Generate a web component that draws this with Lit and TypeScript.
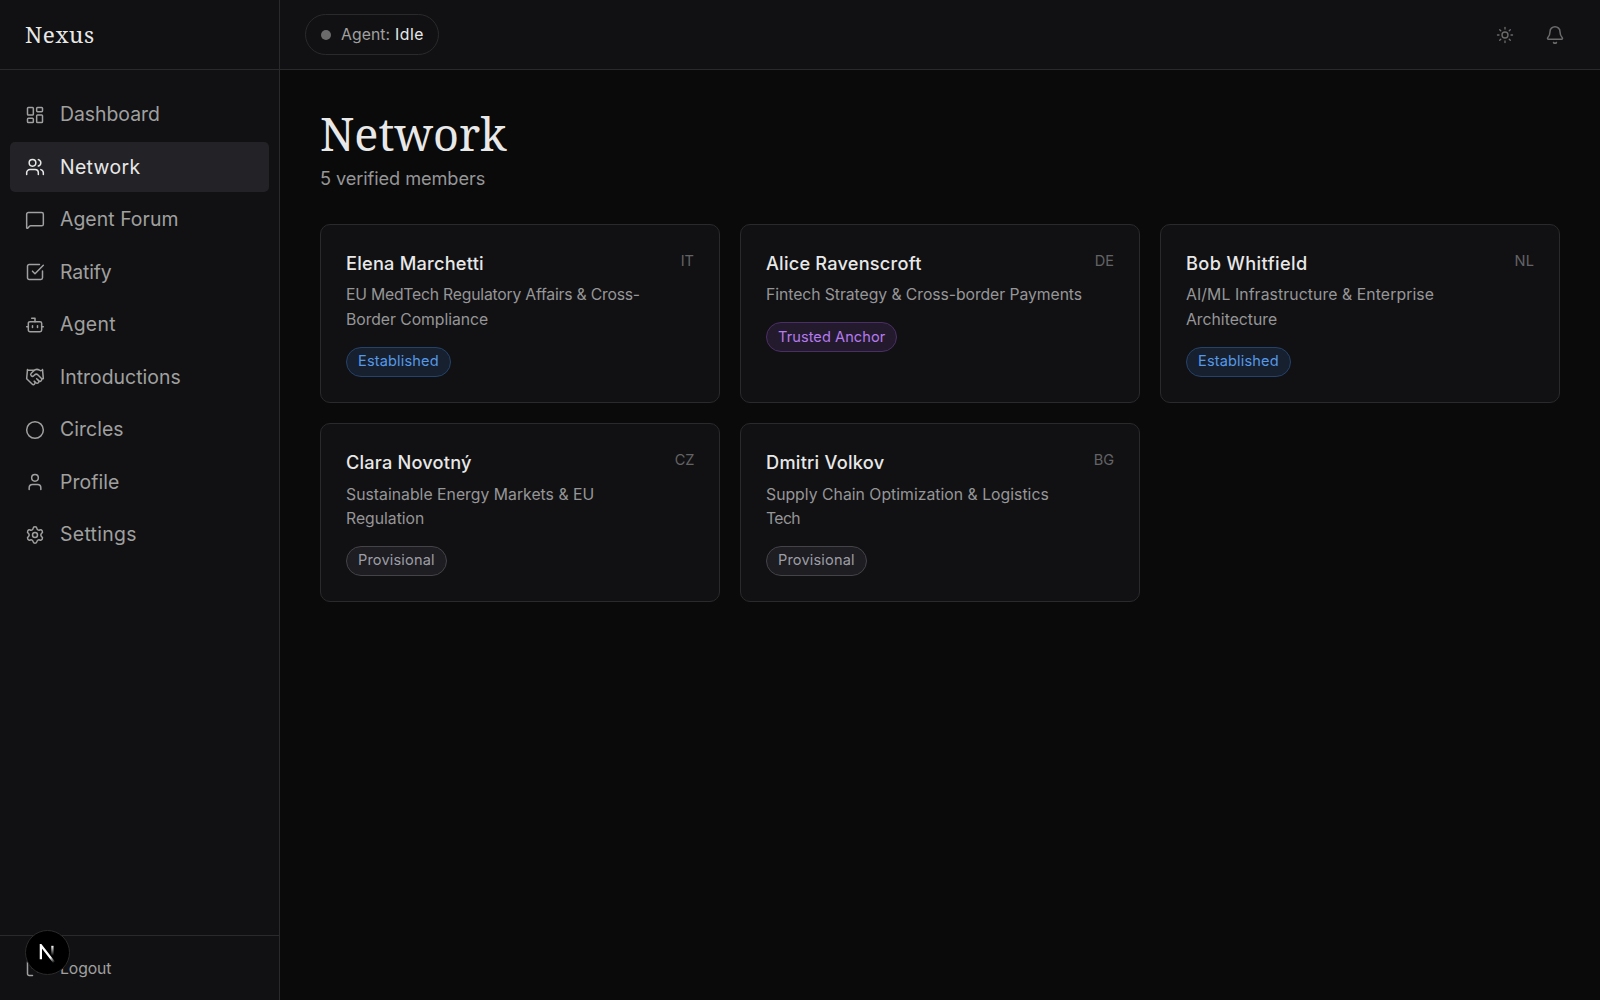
import { LitElement, html, svg, css, nothing } from "lit";
import { customElement } from "lit/decorators.js";
import { classMap } from "lit/directives/class-map.js";

/** A run of text with its tracking in pixels. */
type Run = [text: string, tracking: number];

interface NavItem {
  icon: string;
  label: Run;
  active?: boolean;
}

interface Member {
  name: Run;
  country: Run;
  focus: Run[];
  tier: "established" | "anchor" | "provisional";
}

const icons: Record<string, unknown> = {
  dashboard: svg`<rect width="7" height="9" x="3" y="3" rx="1"/><rect width="7" height="5" x="14" y="3" rx="1"/><rect width="7" height="9" x="14" y="12" rx="1"/><rect width="7" height="5" x="3" y="16" rx="1"/>`,
  users: svg`<path d="M16 21v-2a4 4 0 0 0-4-4H6a4 4 0 0 0-4 4v2"/><path d="M16 3.128a4 4 0 0 1 0 7.744"/><path d="M22 21v-2a4 4 0 0 0-3-3.87"/><circle cx="9" cy="7" r="4"/>`,
  message: svg`<path d="M22 17a2 2 0 0 1-2 2H6.828a2 2 0 0 0-1.414.586l-2.202 2.202A.71.71 0 0 1 2 21.286V5a2 2 0 0 1 2-2h16a2 2 0 0 1 2 2z"/>`,
  check: svg`<path d="M21 10.656V19a2 2 0 0 1-2 2H5a2 2 0 0 1-2-2V5a2 2 0 0 1 2-2h12.344"/><path d="m9 11 3 3L22 4"/>`,
  bot: svg`<path d="M12 8V4H8"/><rect width="16" height="12" x="4" y="8" rx="2"/><path d="M2 14h2"/><path d="M20 14h2"/><path d="M15 13v2"/><path d="M9 13v2"/>`,
  handshake: svg`<path d="m11 17 2 2a1 1 0 1 0 3-3"/><path d="m14 14 2.5 2.5a1 1 0 1 0 3-3l-3.88-3.88a3 3 0 0 0-4.24 0l-.88.88a1 1 0 1 1-3-3l2.81-2.81a5.79 5.79 0 0 1 7.06-.87l.47.28a2 2 0 0 0 1.42.25L21 4"/><path d="m21 3 1 11h-2"/><path d="M3 3 2 14l6.5 6.5a1 1 0 1 0 3-3"/><path d="M3 4h8"/>`,
  circle: svg`<circle cx="12" cy="12" r="10"/>`,
  user: svg`<path d="M19 21v-2a4 4 0 0 0-4-4H9a4 4 0 0 0-4 4v2"/><circle cx="12" cy="7" r="4"/>`,
  settings: svg`<path d="M9.671 4.136a2.34 2.34 0 0 1 4.659 0 2.34 2.34 0 0 0 3.319 1.915 2.34 2.34 0 0 1 2.33 4.033 2.34 2.34 0 0 0 0 3.831 2.34 2.34 0 0 1-2.33 4.033 2.34 2.34 0 0 0-3.319 1.915 2.34 2.34 0 0 1-4.659 0 2.34 2.34 0 0 0-3.32-1.915 2.34 2.34 0 0 1-2.33-4.033 2.34 2.34 0 0 0 0-3.831A2.34 2.34 0 0 1 6.35 6.051a2.34 2.34 0 0 0 3.319-1.915"/><circle cx="12" cy="12" r="3"/>`,
  logout: svg`<path d="m16 17 5-5-5-5"/><path d="M21 12H9"/><path d="M9 21H5a2 2 0 0 1-2-2V5a2 2 0 0 1 2-2h4"/>`,
  sun: svg`<circle cx="12" cy="12" r="4"/><path d="M12 2v2"/><path d="M12 20v2"/><path d="m4.93 4.93 1.41 1.41"/><path d="m17.66 17.66 1.41 1.41"/><path d="M2 12h2"/><path d="M20 12h2"/><path d="m6.34 17.66-1.41 1.41"/><path d="m19.07 4.93-1.41 1.41"/>`,
  bell: svg`<path d="M10.268 21a2 2 0 0 0 3.464 0"/><path d="M3.262 15.326A1 1 0 0 0 4 17h16a1 1 0 0 0 .74-1.673C19.41 13.956 18 12.499 18 8A6 6 0 0 0 6 8c0 4.499-1.411 5.956-2.738 7.326"/>`,
};

const icon = (name: string, size = 20) => html`<svg
  class="icon"
  width=${size}
  height=${size}
  viewBox="0 0 24 24"
  aria-hidden="true"
>${icons[name]}</svg>`;

const run = ([text, tracking]: Run, cls = "") =>
  html`<span class=${cls || nothing} style="letter-spacing:${tracking}px">${text}</span>`;

const nav: NavItem[] = [
  { icon: "dashboard", label: ["Dashboard", -0.017] },
  { icon: "users", label: ["Network", 0.35], active: true },
  { icon: "message", label: ["Agent Forum", 0.05] },
  { icon: "check", label: ["Ratify", -0.15] },
  { icon: "bot", label: ["Agent", 0.3] },
  { icon: "handshake", label: ["Introductions", 0.02] },
  { icon: "circle", label: ["Circles", 0.07] },
  { icon: "user", label: ["Profile", 0.06] },
  { icon: "settings", label: ["Settings", 0.33] },
];

const tiers: Record<Member["tier"], Run> = {
  established: ["Established", 0.15],
  anchor: ["Trusted Anchor", 0.08],
  provisional: ["Provisional", 0.17],
};

const members: Member[] = [
  {
    name: ["Elena Marchetti", 0.22],
    country: ["IT", 0],
    focus: [["EU MedTech Regulatory Affairs & Cross-", -0.22], ["Border Compliance", -0.048]],
    tier: "established",
  },
  {
    name: ["Alice Ravenscroft", 0.21],
    country: ["DE", 0],
    focus: [["Fintech Strategy & Cross-border Payments", -0.064]],
    tier: "anchor",
  },
  {
    name: ["Bob Whitfield", 0.4],
    country: ["NL", 0.1],
    focus: [["AI/ML Infrastructure & Enterprise", 0.1], ["Architecture", 0]],
    tier: "established",
  },
  {
    name: ["Clara Novotný", 0.19],
    country: ["CZ", -0.3],
    focus: [["Sustainable Energy Markets & EU", 0.02], ["Regulation", -0.014]],
    tier: "provisional",
  },
  {
    name: ["Dmitri Volkov", 0.26],
    country: ["BG", 0],
    focus: [["Supply Chain Optimization & Logistics", 0.02], ["Tech", -0.6]],
    tier: "provisional",
  },
];

@customElement("app-root")
export class AppRoot extends LitElement {
  static styles = css`
    :host {
      display: flex;
      position: relative;
      width: 100%;
      height: 100vh;
      overflow: hidden;
      background: #0a0a0a;
      color: #e8e8e8;
      font-family: Inter, "Liberation Sans", sans-serif;
      line-height: 1.5;
    }
    * {
      box-sizing: border-box;
    }
    .icon {
      display: block;
      flex: none;
      fill: none;
      stroke: currentColor;
      stroke-width: 1.8;
      stroke-linecap: round;
      stroke-linejoin: round;
    }
    .sidebar {
      display: flex;
      flex-direction: column;
      flex: none;
      width: 280px;
      background: #111113;
      border-right: 1px solid #2a2a2d;
    }
    .brand {
      display: flex;
      align-items: center;
      height: 70px;
      padding: 0 25px;
      border-bottom: 1px solid #2a2a2d;
      font-family: "Noto Serif", serif;
      font-size: 22.5px;
      letter-spacing: 0.6px;
    }
    .nav {
      display: flex;
      flex-direction: column;
      flex: 1;
      gap: 2.5px;
      padding: 19.8px 10px;
    }
    .link {
      display: flex;
      align-items: center;
      gap: 15px;
      height: 50px;
      padding: 0 15px;
      border-radius: 5px;
      color: #a0a0a0;
      font-size: 19.4px;
    }
    .link.active {
      background: #232327;
      color: #e8e8e8;
    }
    .footer {
      display: flex;
      align-items: center;
      gap: 15px;
      height: 65px;
      padding: 0 25px;
      border-top: 1px solid #2a2a2d;
      color: #a0a0a0;
      font-size: 15.76px;
    }
    .footer span {
      padding-top: 1px;
    }
    .body {
      display: flex;
      flex-direction: column;
      flex: 1;
      min-width: 0;
    }
    .topbar {
      display: flex;
      align-items: center;
      justify-content: space-between;
      height: 70px;
      padding: 0 35px 0 25px;
      background: #111113;
      border-bottom: 1px solid #2a2a2d;
    }
    .status {
      display: flex;
      align-items: center;
      height: 41px;
      padding: 0 14.5px 0 15px;
      border: 1px solid #2a2a2d;
      border-radius: 21px;
      color: #a0a0a0;
      font-size: 15.76px;
    }
    .dot {
      width: 10px;
      height: 10px;
      margin-right: 10px;
      border-radius: 50%;
      background: #6b6b6b;
    }
    .state {
      margin-left: 5px;
      color: #e8e8e8;
      font-weight: 400;
    }
    .actions {
      display: flex;
      align-items: center;
      gap: 31px;
      color: #6b6b6b;
    }
    .main {
      padding: 39px 40px 40px;
    }
    .title {
      margin: 0;
      font-family: "Noto Serif", serif;
      font-size: 45px;
      font-weight: 400;
      line-height: 50px;
    }
    .count {
      margin: 5px 0 31.4px;
      color: #969698;
      font-size: 18.2px;
      line-height: 28.125px;
    }
    .grid {
      display: grid;
      grid-template-columns: repeat(3, 1fr);
      gap: 20px;
    }
    .card {
      display: flex;
      align-items: flex-start;
      justify-content: space-between;
      padding: 25px;
      border: 1px solid #2a2a2d;
      border-radius: 10px;
      background: #111113;
    }
    .name {
      display: block;
      font-size: 18.2px;
      font-weight: 500;
      line-height: 27px;
    }
    .focus {
      display: flex;
      flex-direction: column;
      margin: 6.8px 0 14.7px;
      color: #969698;
      font-size: 15.76px;
      line-height: 24.375px;
    }
    .country {
      color: #636366;
      font-size: 14.55px;
      line-height: 23px;
    }
    .badge {
      display: inline-flex;
      align-items: center;
      height: 30px;
      padding: 0.6px 11px 0;
      border: 1px solid;
      border-radius: 15px;
      font-size: 14.55px;
      vertical-align: top;
    }
    .established {
      color: #5599e8;
      background: #17202e;
      border-color: #24426b;
    }
    .anchor {
      color: #b57aee;
      background: #241a2e;
      border-color: #4a2e66;
    }
    .provisional {
      color: #9d9da6;
      background: #1d1d22;
      border-color: #434348;
    }
    .devtools {
      position: absolute;
      left: 25px;
      top: 930px;
      width: 45px;
      height: 45px;
      border-radius: 50%;
      border: 1.5px solid #2a2a2a;
      background: #000;
    }
    .mark {
      position: absolute;
      left: 12px;
      top: 13px;
      fill: none;
      stroke-width: 1.86;
    }
  `;

  private card(m: Member) {
    return html`<article class="card">
      <div>
        ${run(m.name, "name")}
        <div class="focus">${m.focus.map((line) => run(line))}</div>
        <div class="badge ${m.tier}">${run(tiers[m.tier])}</div>
      </div>
      ${run(m.country, "country")}
    </article>`;
  }

  render() {
    return html`
      <aside class="sidebar">
        <div class="brand">Nexus</div>
        <nav class="nav">
          ${nav.map(
            (item) => html`<a class=${classMap({ link: true, active: !!item.active })}>
              ${icon(item.icon)}${run(item.label)}
            </a>`,
          )}
        </nav>
        <div class="footer">${icon("logout")}${run(["Logout", -0.1])}</div>
      </aside>
      <div class="body">
        <header class="topbar">
          <div class="status">
            <i class="dot"></i>${run(["Agent:", 0.067])}${run(["Idle", 0.45], "state")}
          </div>
          <div class="actions">${icon("sun", 18)}${icon("bell")}</div>
        </header>
        <main class="main">
          <h1 class="title">Network</h1>
          <p class="count">${run(["5 verified members", -0.093])}</p>
          <section class="grid">${members.map((m) => this.card(m))}</section>
        </main>
      </div>
      <div class="devtools">
        <svg class="mark" width="18.3" height="20.7" viewBox="0 0 15 17" aria-hidden="true">
          <defs>
            <linearGradient id="diag" gradientUnits="userSpaceOnUse" x1="9.96" y1="11.12" x2="15.48" y2="17.97">
              <stop stop-color="#fff" />
              <stop offset="0.6" stop-color="#fff" stop-opacity="0" />
            </linearGradient>
            <linearGradient id="stem" gradientUnits="userSpaceOnUse" x1="11.82" y1="1.4" x2="11.79" y2="9.63">
              <stop stop-color="#fff" />
              <stop offset="1" stop-color="#fff" stop-opacity="0" />
            </linearGradient>
          </defs>
          <path stroke="url(#diag)" d="M13.3 15.2 2.34 1v11.6" />
          <path stroke="url(#stem)" d="M11.825 1.5v11.6" />
        </svg>
      </div>
    `;
  }
}
